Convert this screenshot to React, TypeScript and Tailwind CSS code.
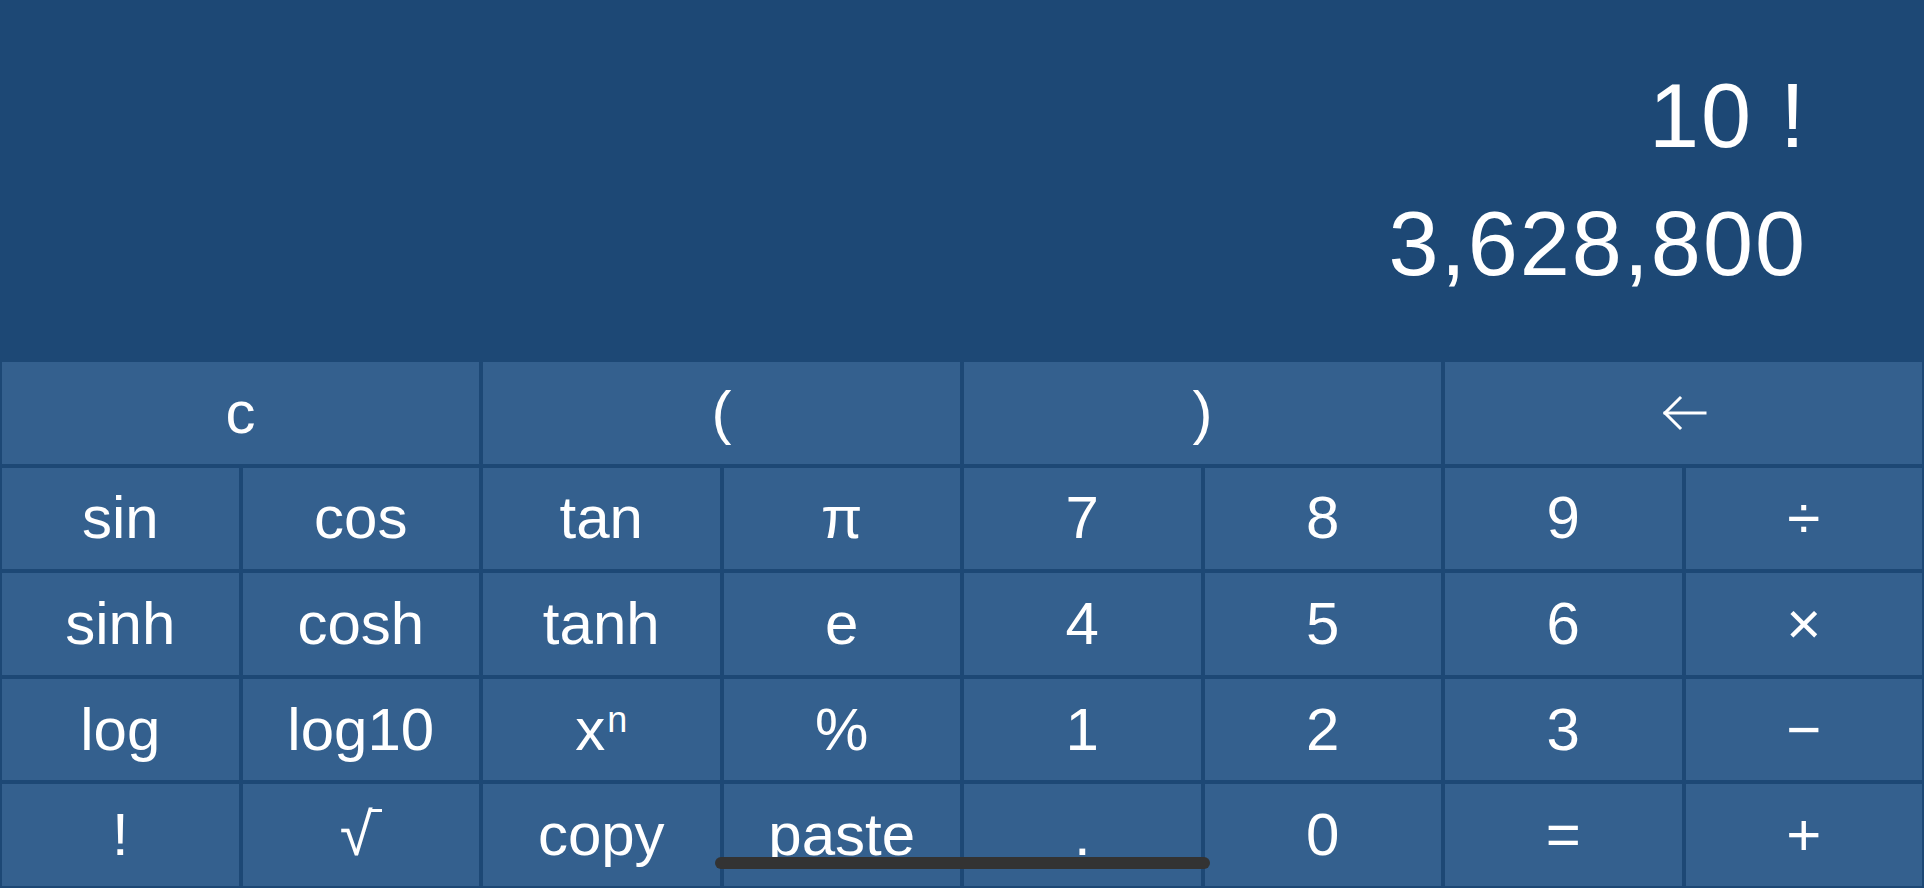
const font = { fontFamily: '"Liberation Sans", Arial, sans-serif' };

type Key = { label: string; span?: boolean };

const keys: Key[] = [
  { label: "c", span: true },
  { label: "(", span: true },
  { label: ")", span: true },
  { label: "back", span: true },
  { label: "sin" }, { label: "cos" }, { label: "tan" }, { label: "π" },
  { label: "7" }, { label: "8" }, { label: "9" }, { label: "÷" },
  { label: "sinh" }, { label: "cosh" }, { label: "tanh" }, { label: "e" },
  { label: "4" }, { label: "5" }, { label: "6" }, { label: "×" },
  { label: "log" }, { label: "log10" }, { label: "xn" }, { label: "%" },
  { label: "1" }, { label: "2" }, { label: "3" }, { label: "−" },
  { label: "!" }, { label: "√" }, { label: "copy" }, { label: "paste" },
  { label: "." }, { label: "0" }, { label: "=" }, { label: "+" },
];

function BackArrow() {
  return (
    <svg width="46" height="36" viewBox="0 0 46 36" fill="none" stroke="white" strokeWidth="3" strokeLinecap="square">
      <path d="M4 18H44" />
      <path d="M19 3L4 18L19 33" />
    </svg>
  );
}

function renderLabel(label: string) {
  if (label === "back") return <BackArrow />;
  if (label === "xn")
    return (
      <span>
        x<sup className="text-[36px] ml-[2px]">n</sup>
      </span>
    );
  if (label === "√")
    return (
      <span className="inline-flex items-start">
        √<span className="w-[12px] h-[3px] mt-[4px] -ml-[3px] bg-white" />
      </span>
    );
  return label;
}

export default function App() {
  return (
    <div className="relative w-[1924px] h-[888px] overflow-hidden bg-[#1d4875] text-white" style={font}>
      <div className="h-[360px] pt-[52px] pr-[117px] text-right text-[90px] leading-[128px] tracking-[2px]">
        <div>10 !</div>
        <div>3,628,800</div>
      </div>
      <div className="grid grid-cols-8 grid-rows-5 gap-[4px] p-[2px] h-[528px]">
        {keys.map((k, i) => (
          <div
            key={i}
            className={`${k.span ? "col-span-2" : ""} flex items-center justify-center bg-[#34608e] text-[60px] leading-none`}
          >
            {renderLabel(k.label)}
          </div>
        ))}
      </div>
      <div className="absolute left-[715px] top-[857px] w-[495px] h-[12px] rounded-full bg-[#333333]" />
    </div>
  );
}
